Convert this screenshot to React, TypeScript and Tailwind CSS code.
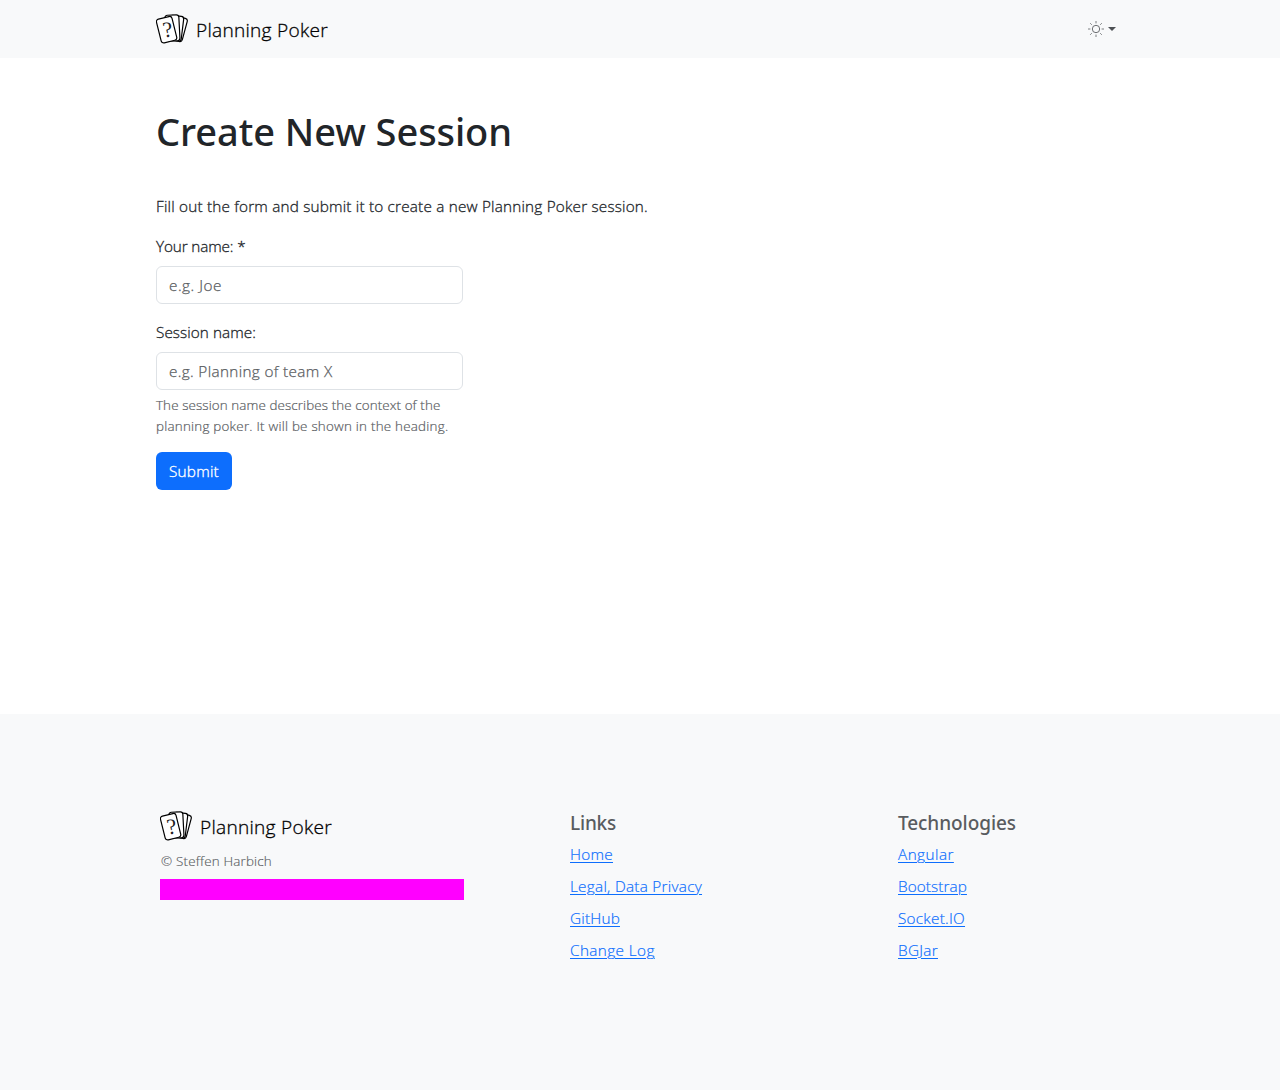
import React from "react";

function CardsLogo() {
  return (
    <svg width="32" height="32" viewBox="0 0 32 32" fill="#fff" stroke="#000" strokeWidth="1.2" className="block shrink-0">
      <rect x="15" y="3.8" width="14" height="24" rx="2.6" transform="rotate(15 22 15.8)" />
      <rect x="12.5" y="2.8" width="14" height="25" rx="2.6" transform="rotate(7 19.5 15.3)" />
      <rect x="9.4" y="2" width="14" height="26" rx="2.6" transform="rotate(-3 16.4 15)" />
      <rect x="2.6" y="4.5" width="16" height="24.4" rx="2.6" transform="rotate(-14 10.6 16.7)" />
      <text x="6.8" y="24" fontSize="22" fill="#222" stroke="none" transform="rotate(-8 11 17)" className="font-['Liberation_Serif',serif] font-normal [-webkit-text-stroke:0px]">?</text>
    </svg>
  );
}

function SunIcon() {
  return (
    <svg width="16" height="16" viewBox="0 0 16 16" fill="none" stroke="#5c5f62" strokeWidth="0.9" className="block">
      <circle cx="8" cy="8" r="3.7" />
      <path strokeWidth="0.8" d="M8 0v2.4M8 13.6v2.4M0 8h2.4M13.6 8h2.4M2.2 2.2l1.6 1.6M12.2 12.2l1.6 1.6M2.2 13.8l1.6-1.6M12.2 3.8l1.6-1.6" />
    </svg>
  );
}

function Brand() {
  return (
    <a href="#" className="flex items-center gap-2 text-black">
      <CardsLogo />
      <span className="mt-px text-[19.1px] leading-[30px] tracking-[0.27px]">Planning Poker</span>
    </a>
  );
}

const links: [string, string][] = [
  ["Home", "tracking-[0.28px]"],
  ["Legal, Data Privacy", "tracking-[0.27px]"],
  ["GitHub", "tracking-[0.2px]"],
  ["Change Log", "tracking-[0.4px]"],
];
const technologies: [string, string][] = [
  ["Angular", "tracking-[0.45px]"],
  ["Bootstrap", "tracking-[0.1px]"],
  ["Socket.IO", "tracking-[0.26px]"],
  ["BGJar", "tracking-[0.3px]"],
];

function LinkList({ items }: { items: [string, string][] }) {
  return (
    <ul className="flex flex-col gap-2 [-webkit-text-stroke:0.2px_currentColor]">
      {items.map(([label, tracking]) => (
        <li key={label} className="leading-6">
          <a href="#" className={`text-[#0d6efd] underline decoration-1 underline-offset-[1.5px] ${tracking}`}>{label}</a>
        </li>
      ))}
    </ul>
  );
}

export default function App() {
  return (
    <div className="flex min-h-[1090px] flex-col bg-white font-['Open_Sans',sans-serif] text-[15.3px] leading-6 font-light text-[#212529] [-webkit-text-stroke:0.3px_currentColor]">
      <nav className="h-[58px] bg-[#f8f9fa]">
        <div className="mx-auto flex h-full w-[992px] items-center justify-between pr-5 pl-3">
          <Brand />
          <button className="flex items-center gap-1">
            <SunIcon />
            <span className="border-x-[4.5px] border-t-[4.5px] border-x-transparent border-t-[#4d5154]" />
          </button>
        </div>
      </nav>

      <main className="mx-auto h-[656px] w-[992px] px-3 pt-[49px]">
        <h1 className="font-['Noto_Sans',sans-serif] text-[38px] leading-[48px] font-medium tracking-[-0.07px] [-webkit-text-stroke:0px]">Create New Session</h1>
        <p className="mt-[39px] tracking-[0.195px]">Fill out the form and submit it to create a new Planning Poker session.</p>
        <form className="mt-4 w-[307px]">
          <label className="block tracking-[-0.14px]">Your name: *</label>
          <input placeholder="e.g. Joe" className="mt-2 block h-[38px] w-full rounded-md border border-[#dee2e6] px-3 tracking-[0.52px] placeholder:text-[#595c5f] placeholder:[-webkit-text-stroke:0.25px_#595c5f]" />
          <label className="mt-4 block tracking-[0.06px]">Session name:</label>
          <input placeholder="e.g. Planning of team X" className="mt-2 block h-[38px] w-full rounded-md border border-[#dee2e6] px-3 tracking-[0.35px] placeholder:text-[#595c5f] placeholder:[-webkit-text-stroke:0.25px_#595c5f]" />
          <p className="mt-[5px] text-[13.4px] leading-[21px] text-[#595c5f] [-webkit-text-stroke:0.2px_currentColor]">
            <span className="block tracking-[0.1px]">The session name describes the context of the</span>
            <span className="block whitespace-nowrap tracking-[0.23px]">planning poker. It will be shown in the heading.</span>
          </p>
          <button type="button" className="mt-[15px] h-[38px] w-[76px] rounded-md bg-[#0d6efd] tracking-[0.23px] text-white [-webkit-text-stroke:0.35px_#fff]">Submit</button>
        </form>
      </main>

      <footer className="flex-1 bg-[#f8f9fa] pt-24">
        <div className="mx-auto flex w-[960px] text-[#595c5f]">
          <div className="w-[410px]">
            <Brand />
            <p className="mt-[9px] pl-px text-[13.4px] leading-[21px] tracking-[0.19px] [-webkit-text-stroke:0.15px_currentColor]">© Steffen Harbich</p>
            <div className="mt-[7px] h-[21px] w-[304px] bg-[#ff00ff]" />
          </div>
          <div className="w-[328px]">
            <h2 className="mt-px mb-[7px] font-['Noto_Sans',sans-serif] text-[19px] leading-6 font-medium tracking-[-0.2px] [-webkit-text-stroke:0px]">Links</h2>
            <LinkList items={links} />
          </div>
          <div>
            <h2 className="mt-px mb-[7px] font-['Noto_Sans',sans-serif] text-[19px] leading-6 font-medium tracking-[-0.07px] [-webkit-text-stroke:0px]">Technologies</h2>
            <LinkList items={technologies} />
          </div>
        </div>
      </footer>
    </div>
  );
}
